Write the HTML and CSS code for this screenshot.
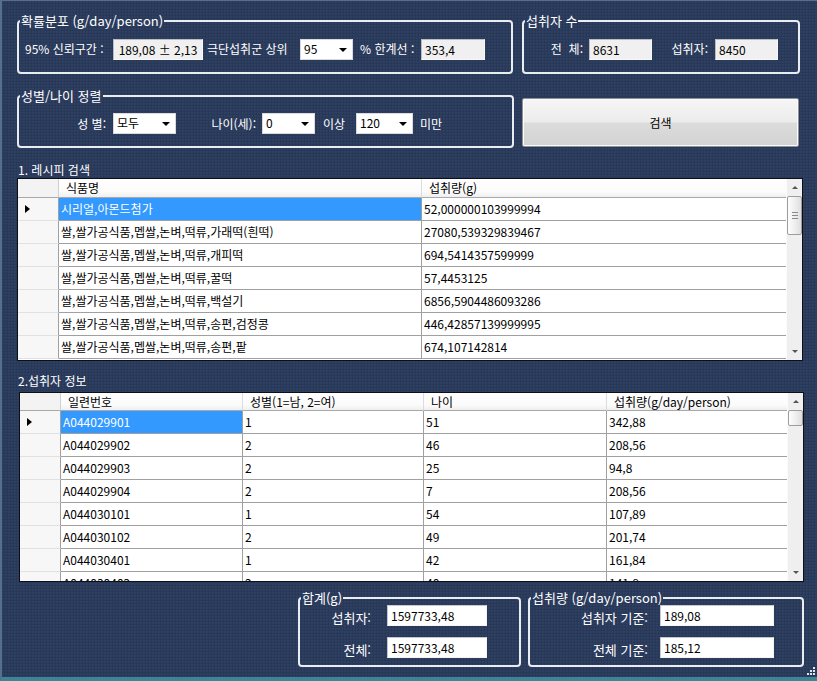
FILE: index.html
```html
<!DOCTYPE html>
<html lang="ko">
<head>
<meta charset="utf-8">
<title>확률분포</title>
<link rel="stylesheet" href="styles.css">
</head>
<body>
<div class="window">
  <div class="row1">
    <fieldset class="group g-dist">
      <legend>확률분포 (g/day/person)</legend>
      <div class="gbody">
        <span class="lbl l-ci">95% 신뢰구간 :</span>
        <div class="tb tb-gray tb-ci">189,08 ± 2,13</div>
        <span class="lbl l-top">극단섭취군 상위</span>
        <div class="combo c-pct"><span>95</span><i class="arrow"></i></div>
        <span class="lbl l-lim">% 한계선 :</span>
        <div class="tb tb-gray tb-lim">353,4</div>
      </div>
    </fieldset>
    <fieldset class="group g-count">
      <legend>섭취자 수</legend>
      <div class="gbody">
        <span class="lbl l-all">전&nbsp;&nbsp;체:</span>
        <div class="tb tb-gray tb-cnt">8631</div>
        <span class="lbl l-eat">섭취자:</span>
        <div class="tb tb-gray tb-cnt">8450</div>
      </div>
    </fieldset>
  </div>

  <div class="row2">
    <fieldset class="group g-sort">
      <legend>성별/나이 정렬</legend>
      <div class="gbody">
        <span class="lbl l-sex">성&nbsp;별:</span>
        <div class="combo c-sex"><span>모두</span><i class="arrow"></i></div>
        <span class="lbl l-age">나이(세):</span>
        <div class="combo c-age"><span>0</span><i class="arrow"></i></div>
        <span class="lbl l-over">이상</span>
        <div class="combo c-max"><span>120</span><i class="arrow"></i></div>
        <span class="lbl l-under">미만</span>
      </div>
    </fieldset>
    <div class="btn">검색</div>
  </div>

  <div class="section-label s1">1. 레시피 검색</div>
  <div class="grid grid1">
    <div class="gcontent">
      <div class="grow ghead">
        <div class="c rh"></div>
        <div class="c g1c1">식품명</div>
        <div class="c g1c2">섭취량(g)</div>
      </div>
      <div class="grow">
        <div class="c rh"><i class="ptr"></i></div>
        <div class="c g1c1 sel">시리얼,아몬드첨가</div>
        <div class="c g1c2">52,000000103999994</div>
      </div>
      <div class="grow">
        <div class="c rh"></div>
        <div class="c g1c1">쌀,쌀가공식품,멥쌀,논벼,떡류,가래떡(흰떡)</div>
        <div class="c g1c2">27080,539329839467</div>
      </div>
      <div class="grow">
        <div class="c rh"></div>
        <div class="c g1c1">쌀,쌀가공식품,멥쌀,논벼,떡류,개피떡</div>
        <div class="c g1c2">694,5414357599999</div>
      </div>
      <div class="grow">
        <div class="c rh"></div>
        <div class="c g1c1">쌀,쌀가공식품,멥쌀,논벼,떡류,꿀떡</div>
        <div class="c g1c2">57,4453125</div>
      </div>
      <div class="grow">
        <div class="c rh"></div>
        <div class="c g1c1">쌀,쌀가공식품,멥쌀,논벼,떡류,백설기</div>
        <div class="c g1c2">6856,5904486093286</div>
      </div>
      <div class="grow">
        <div class="c rh"></div>
        <div class="c g1c1">쌀,쌀가공식품,멥쌀,논벼,떡류,송편,검정콩</div>
        <div class="c g1c2">446,42857139999995</div>
      </div>
      <div class="grow">
        <div class="c rh"></div>
        <div class="c g1c1">쌀,쌀가공식품,멥쌀,논벼,떡류,송편,팥</div>
        <div class="c g1c2">674,107142814</div>
      </div>
    </div>
    <div class="vscroll">
      <div class="sbtn"><i class="up"></i></div>
      <div class="track"><div class="thumb thumb1"><i></i><i></i><i></i></div></div>
      <div class="sbtn"><i class="down"></i></div>
    </div>
  </div>

  <div class="section-label s2">2.섭취자 정보</div>
  <div class="grid grid2">
    <div class="gcontent">
      <div class="grow ghead">
        <div class="c rh2"></div>
        <div class="c g2c1">일련번호</div>
        <div class="c g2c2">성별(1=남, 2=여)</div>
        <div class="c g2c3">나이</div>
        <div class="c g2c4">섭취량(g/day/person)</div>
      </div>
      <div class="grow">
        <div class="c rh2"><i class="ptr"></i></div>
        <div class="c g2c1 sel">A044029901</div>
        <div class="c g2c2">1</div>
        <div class="c g2c3">51</div>
        <div class="c g2c4">342,88</div>
      </div>
      <div class="grow">
        <div class="c rh2"></div>
        <div class="c g2c1">A044029902</div>
        <div class="c g2c2">2</div>
        <div class="c g2c3">46</div>
        <div class="c g2c4">208,56</div>
      </div>
      <div class="grow">
        <div class="c rh2"></div>
        <div class="c g2c1">A044029903</div>
        <div class="c g2c2">2</div>
        <div class="c g2c3">25</div>
        <div class="c g2c4">94,8</div>
      </div>
      <div class="grow">
        <div class="c rh2"></div>
        <div class="c g2c1">A044029904</div>
        <div class="c g2c2">2</div>
        <div class="c g2c3">7</div>
        <div class="c g2c4">208,56</div>
      </div>
      <div class="grow">
        <div class="c rh2"></div>
        <div class="c g2c1">A044030101</div>
        <div class="c g2c2">1</div>
        <div class="c g2c3">54</div>
        <div class="c g2c4">107,89</div>
      </div>
      <div class="grow">
        <div class="c rh2"></div>
        <div class="c g2c1">A044030102</div>
        <div class="c g2c2">2</div>
        <div class="c g2c3">49</div>
        <div class="c g2c4">201,74</div>
      </div>
      <div class="grow">
        <div class="c rh2"></div>
        <div class="c g2c1">A044030401</div>
        <div class="c g2c2">1</div>
        <div class="c g2c3">42</div>
        <div class="c g2c4">161,84</div>
      </div>
      <div class="grow">
        <div class="c rh2"></div>
        <div class="c g2c1">A044030402</div>
        <div class="c g2c2">2</div>
        <div class="c g2c3">40</div>
        <div class="c g2c4">141,8</div>
      </div>
    </div>
    <div class="vscroll">
      <div class="sbtn"><i class="up"></i></div>
      <div class="track"><div class="thumb thumb2"></div></div>
      <div class="sbtn"><i class="down"></i></div>
    </div>
  </div>

  <div class="row3">
    <fieldset class="group g-sum">
      <legend>합계(g)</legend>
      <div class="pairs sum-pairs">
        <span class="plbl">섭취자:</span>
        <div class="tb tb-white">1597733,48</div>
        <span class="plbl">전체:</span>
        <div class="tb tb-white">1597733,48</div>
      </div>
    </fieldset>
    <fieldset class="group g-intake">
      <legend>섭취량 (g/day/person)</legend>
      <div class="pairs intake-pairs">
        <span class="plbl">섭취자 기준:</span>
        <div class="tb tb-white">189,08</div>
        <span class="plbl">전체 기준:</span>
        <div class="tb tb-white">185,12</div>
      </div>
    </fieldset>
  </div>

  <svg class="grip" width="10" height="10" viewBox="0 0 10 10">
    <rect x="8" y="2" width="2" height="2" fill="#dfe6ee"/>
    <rect x="5" y="5" width="2" height="2" fill="#dfe6ee"/>
    <rect x="8" y="5" width="2" height="2" fill="#dfe6ee"/>
    <rect x="2" y="8" width="2" height="2" fill="#dfe6ee"/>
    <rect x="5" y="8" width="2" height="2" fill="#dfe6ee"/>
    <rect x="8" y="8" width="2" height="2" fill="#dfe6ee"/>
  </svg>
</div>
</body>
</html>
```

FILE: styles.css
```css
* { box-sizing: border-box; }
html, body { margin: 0; padding: 0; }
body {
  width: 817px;
  height: 681px;
  overflow: hidden;
  font-family: "Noto Sans CJK KR", "Noto Sans", sans-serif;
  font-size: 12px;
  color: #fff;
}
.window {
  position: relative;
  width: 817px;
  height: 681px;
  padding: 13px 13px 0 15px;
  border-top: 1px solid #5b6c8c;
  border-left: 2px solid #55708a;
  border-bottom: 4px solid #3b8596;
  background-color: #293a5c;
  background-image:
    radial-gradient(circle at 1px 1px, rgba(255,255,255,0.03) 0.7px, transparent 1px),
    radial-gradient(circle at 2px 2px, rgba(0,0,0,0.06) 0.7px, transparent 1px);
  background-size: 3px 3px, 3px 3px;
}

/* group boxes */
.group {
  margin: 0;
  padding: 0;
  min-width: 0;
  border: 2px solid #e9ecf0;
  border-radius: 4px;
}
.group legend {
  margin-left: 1px;
  padding: 0 1px;
  font-size: 13px;
  line-height: 14px;
  color: #fff;
}
.gbody {
  display: flex;
  align-items: center;
  height: 44px;
  padding-bottom: 2px;
}
.lbl { white-space: nowrap; line-height: 16px; }

.row1 { display: flex; gap: 9px; height: 60px; }
.g-dist { width: 496px; }
.g-count { width: 278px; }

.l-ci { width: 94px; padding-left: 6px; }
.tb-ci { width: 90px; text-align: center; }
.l-top { width: 97px; padding-left: 4px; }
.c-pct { width: 53px; }
.l-lim { width: 68px; padding-left: 7px; }
.tb-lim { width: 64px; }

.l-all { width: 65px; text-align: right; padding-right: 6px; }
.tb-cnt { width: 63px; }
.l-eat { width: 63px; text-align: right; padding-right: 7px; }

/* text boxes */
.tb {
  height: 21px;
  line-height: 19px;
  padding: 0 3px;
  color: #000;
  white-space: nowrap;
  border: 1px solid;
}
.tb-gray {
  background: #f0f0f0;
  border-color: #b9bcc2 #f8f8f8 #f8f8f8 #b9bcc2;
}
.tb-white {
  background: #fff;
  border-color: #c4c7cc #f4f4f4 #f4f4f4 #c4c7cc;
}

/* combo boxes */
.combo {
  position: relative;
  height: 21px;
  line-height: 18px;
  padding: 0 3px;
  background: #fff;
  border: 1px solid #d8dade;
  color: #000;
}
.combo .arrow {
  position: absolute;
  right: 5px;
  top: 8px;
  width: 0;
  height: 0;
  border-left: 4px solid transparent;
  border-right: 4px solid transparent;
  border-top: 4px solid #000;
}

/* row 2 */
.row2 { display: flex; gap: 8px; height: 59px; margin-top: 15px; }
.g-sort { width: 497px; }
.g-sort .gbody { height: 43px; }
.l-sex { width: 94px; text-align: right; padding-right: 7px; }
.c-sex { width: 63px; }
.l-age { width: 86px; text-align: right; padding-right: 6px; }
.c-age { width: 53px; }
.l-over { width: 41px; padding-left: 8px; }
.c-max { width: 57px; }
.l-under { padding-left: 7px; }

.btn {
  width: 277px;
  height: 49px;
  margin-top: 9px;
  display: flex;
  align-items: center;
  justify-content: center;
  color: #000;
  border: 1px solid #8e9298;
  border-radius: 2px;
  background: linear-gradient(#f6f6f6 0%, #ececec 48%, #dcdcdc 52%, #d2d2d2 100%);
  box-shadow: inset 0 0 0 1px #fbfbfb;
}

/* section labels */
.section-label { height: 17px; line-height: 17px; padding-left: 1px; }
.s1 { margin-top: 13px; }
.s2 { margin-top: 11px; }

/* grids */
.grid {
  display: flex;
  border: 1px solid #0c0f16;
  background: #fff;
  color: #000;
  overflow: hidden;
}
.grid1 { width: 786px; height: 183px; }
.grid2 { width: 785px; height: 190px; margin-top: 3px; margin-left: 2px; }
.gcontent { overflow: hidden; }
.grow { display: flex; height: 23px; }
.grid1 .ghead { height: 19px; }
.grid2 .ghead { height: 18px; }
.c {
  flex: none;
  height: 100%;
  padding-left: 2px;
  line-height: 22px;
  white-space: nowrap;
  overflow: hidden;
  border-right: 1px solid #a0a0a0;
  border-bottom: 1px solid #a0a0a0;
}
.ghead .c {
  line-height: 17px;
  padding-left: 7px;
  background: linear-gradient(#ffffff 0%, #fbfbfb 70%, #efefef 100%);
  border-right-color: #dcdcdc;
  border-bottom-color: #a9a9a9;
}
.ghead .c:last-child { border-right: none; }
.rh, .rh2 {
  position: relative;
  background: #f7f7f7;
  border-bottom-color: #e1e1e1;
  border-right-color: #a0a0a0;
}
.ghead .rh, .ghead .rh2 { background: #f3f3f3; border-right-color: #d0d0d0; }
.rh { width: 41px; }
.g1c1 { width: 363px; }
.g1c2 { width: 364px; border-right: none; }
.rh2 { width: 41px; }
.g2c1 { width: 182px; }
.g2c2 { width: 181px; }
.g2c3 { width: 183px; }
.g2c4 { width: 180px; border-right: none; }
.sel { background: #3399ff; color: #fff; border-bottom-color: #a0a0a0; }

.ptr {
  position: absolute;
  left: 7px;
  top: 7px;
  width: 0;
  height: 0;
  border-top: 4px solid transparent;
  border-bottom: 4px solid transparent;
  border-left: 5px solid #000;
}

/* vertical scrollbar */
.vscroll {
  flex: none;
  width: 16px;
  margin-left: auto;
  display: flex;
  flex-direction: column;
  background: #efefef;
  border-left: 1px solid #fbfbfb;
}
.sbtn {
  height: 17px;
  display: flex;
  align-items: center;
  justify-content: center;
}
.sbtn .up, .sbtn .down {
  width: 0;
  height: 0;
  border-left: 3px solid transparent;
  border-right: 3px solid transparent;
}
.sbtn .up { border-bottom: 3px solid #555; }
.sbtn .down { border-top: 3px solid #555; }
.track { flex: 1; position: relative; }
.thumb {
  width: 15px;
  border: 1px solid #9d9d9d;
  border-radius: 2px;
  background: linear-gradient(90deg, #fdfdfd, #ececec 60%, #dedede);
  display: flex;
  flex-direction: column;
  align-items: center;
  justify-content: center;
  gap: 2px;
}
.thumb i { display: block; width: 6px; height: 1px; background: #8a8a8a; }
.thumb1 { height: 39px; }
.thumb2 { height: 16px; }

/* bottom row */
.row3 {
  display: flex;
  gap: 7px;
  height: 76px;
  margin-top: 9px;
  padding-left: 281px;
}
.g-sum { width: 223px; }
.g-intake { width: 276px; }
.pairs {
  display: grid;
  row-gap: 11px;
  margin-top: 0;
  align-items: center;
}
.sum-pairs { grid-template-columns: 87px 100px; }
.intake-pairs { grid-template-columns: 130px 114px; }
.plbl {
  text-align: right;
  white-space: nowrap;
  font-size: 13px;
  line-height: 15px;
  padding-top: 3px;
}
.sum-pairs .plbl { padding-right: 16px; }
.intake-pairs .plbl { padding-right: 12px; }

.grip { position: absolute; right: 2px; bottom: 2px; }
```
